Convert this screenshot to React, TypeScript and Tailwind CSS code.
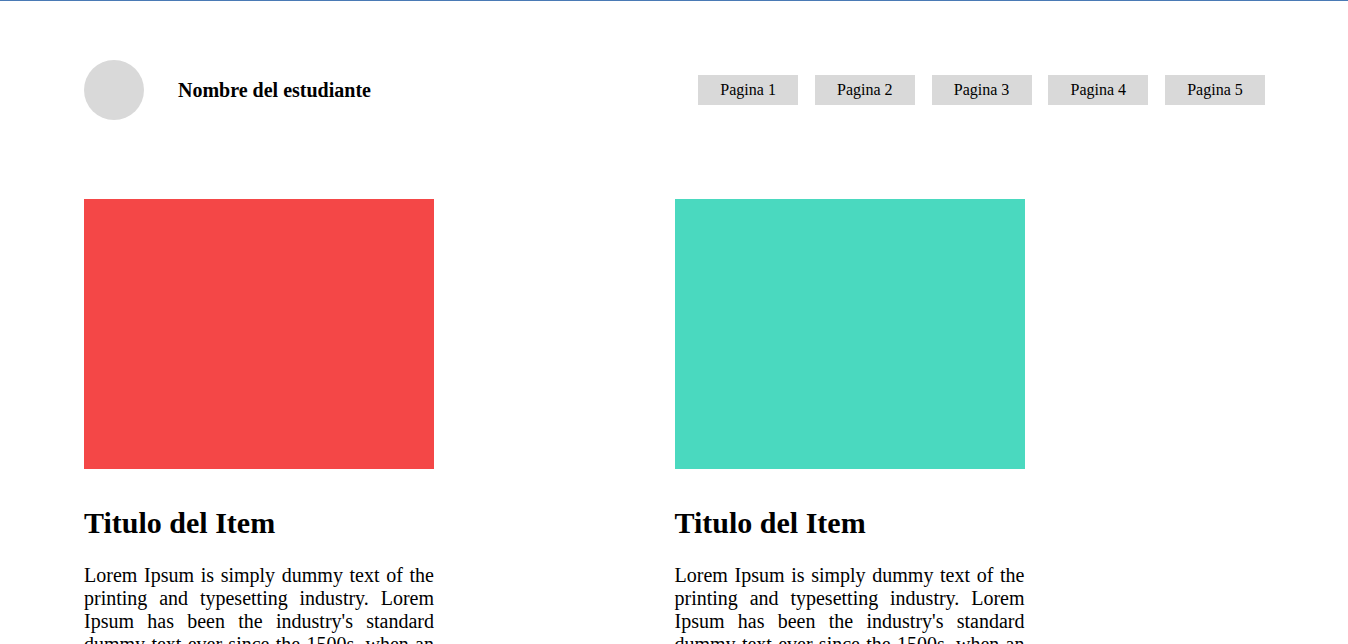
const pages = ['Pagina 1', 'Pagina 2', 'Pagina 3', 'Pagina 4', 'Pagina 5'];

const items = [
  { id: 'item-1', color: 'bg-[#f44747]' },
  { id: 'item-2', color: 'bg-[#4ad9bf]' },
];

const description =
  "Lorem Ipsum is simply dummy text of the printing and typesetting industry. Lorem Ipsum has been the industry's standard dummy text ever since the 1500s, when an unknown printer took a galley of type and scrambled it to make a type specimen book.";

function Header() {
  return (
    <header className="flex items-center justify-between">
      <div className="flex items-center gap-[34px]">
        <div className="size-[60px] rounded-full bg-[#d9d9d9]" />
        <p className="text-[20px] leading-6 font-bold">Nombre del estudiante</p>
      </div>
      <nav className="flex w-[48%] justify-between">
        {pages.map((page) => (
          <a
            key={page}
            href="#"
            className="flex h-[30px] w-[100px] items-center justify-center bg-[#d9d9d9] text-base"
          >
            {page}
          </a>
        ))}
      </nav>
    </header>
  );
}

function Item({ color }: { color: string }) {
  return (
    <article className="w-[350px]">
      <div className={`h-[270px] ${color}`} />
      <h2 className="mt-9 text-[30px] leading-9 font-bold">Titulo del Item</h2>
      <p className="mt-[23px] text-justify text-[20px] leading-[23px]">{description}</p>
    </article>
  );
}

export default function App() {
  return (
    <div className="min-h-screen border-t border-[#4a7ab5] bg-white font-['Liberation_Serif',serif] text-black">
      <div className="pt-[59px] pr-[83px] pl-[84px]">
        <Header />
        <main className="mt-[79px] grid grid-cols-2">
          {items.map((item) => (
            <Item key={item.id} color={item.color} />
          ))}
        </main>
      </div>
    </div>
  );
}
